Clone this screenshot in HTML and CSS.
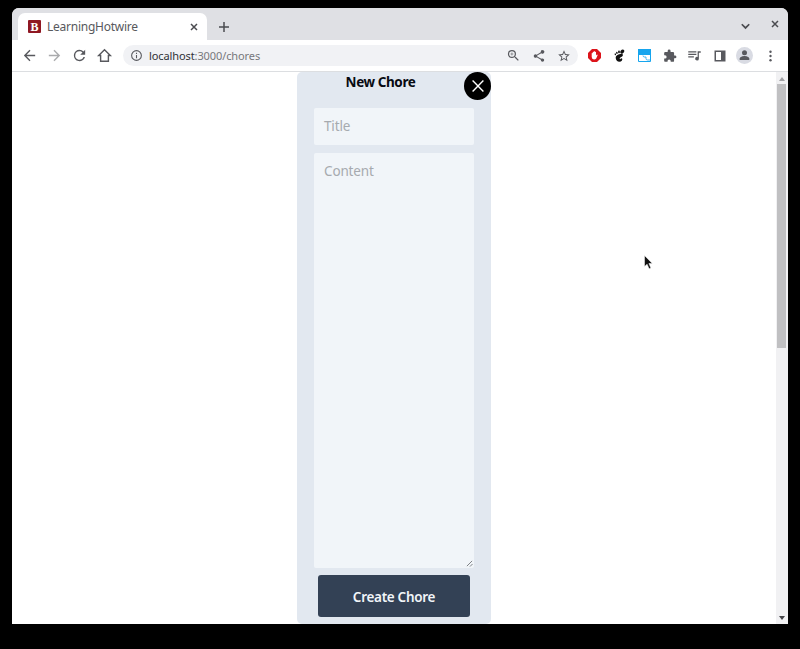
FILE: index.html
```html
<!DOCTYPE html>
<html lang="en">
<head>
<meta charset="utf-8">
<title>LearningHotwire</title>
<link rel="stylesheet" href="styles.css">
</head>
<body>
<div class="window">
  <header class="tabstrip">
    <div class="tab">
      <svg class="favicon" viewBox="0 0 13 13"><rect width="13" height="13" rx="1" fill="#8f1723"/><text x="6.5" y="11" text-anchor="middle">B</text></svg>
      <span class="tab-title">LearningHotwire</span>
      <svg class="tab-close" viewBox="0 0 8 8"><path d="M1 1l6 6M7 1L1 7"/></svg>
    </div>
    <svg class="new-tab" viewBox="0 0 10 10"><path d="M5 0v10M0 5h10"/></svg>
    <svg class="tab-search" viewBox="0 0 8 6"><path d="M.7 1L4 4.300 7.300 1"/></svg>
    <svg class="win-close" viewBox="0 0 8 8"><path d="M1 1l6 6M7 1L1 7"/></svg>
  </header>
  <nav class="toolbar">
    <div class="slots">
      <span class="slot"><svg class="i17" viewBox="0 0 24 24"><path d="M20 11H7.830l5.590-5.590L12 4l-8 8 8 8 1.410-1.410L7.830 13H20z"/></svg></span>
      <span class="slot faded"><svg class="i17" viewBox="0 0 24 24"><path d="M12 4l-1.410 1.410L16.170 11H4v2h12.170l-5.580 5.590L12 20l8-8z"/></svg></span>
      <span class="slot"><svg class="i17" viewBox="0 0 24 24"><path d="M17.650 6.350A7.960 7.960 0 0 0 12 4a8 8 0 1 0 7.730 10h-2.080A6 6 0 1 1 12 6c1.660 0 3.140.69 4.220 1.780L13 11h7V4z"/></svg></span>
      <span class="slot"><svg class="i17" viewBox="0 0 24 24"><path class="line" d="M12 4L3.800 12H6.500v8h11v-8h2.700z"/></svg></span>
    </div>
    <div class="omnibox">
      <svg class="info" viewBox="0 0 24 24"><path d="M11 7h2v2h-2zm0 4h2v6h-2zm1-9a10 10 0 1 0 0 20 10 10 0 0 0 0-20zm0 18a8 8 0 1 1 0-16 8 8 0 0 1 0 16z"/></svg>
      <span class="url"><b>localhost</b>:3000/chores</span>
      <div class="slots">
        <span class="slot"><svg class="i15" viewBox="0 0 24 24"><path d="M15.500 14h-.79l-.28-.27A6.470 6.470 0 0 0 16 9.500 6.500 6.500 0 1 0 9.500 16c1.610 0 3.090-.59 4.230-1.570l.27.28v.79l5 4.990L20.490 19zm-6 0a4.500 4.500 0 1 1 0-9 4.500 4.500 0 0 1 0 9zM12 10h-2v2H9v-2H7V9h2V7h1v2h2z"/></svg></span>
        <span class="slot"><svg class="i14" viewBox="0 0 24 24"><path d="M18 16.080c-.76 0-1.440.3-1.960.77L8.910 12.700a3.300 3.300 0 0 0 0-1.400l7.050-4.110A3 3 0 1 0 15 5c0 .24.040.47.090.7L8.040 9.810a3 3 0 1 0 0 4.380l7.120 4.160c-.05.21-.08.43-.08.65A2.920 2.920 0 1 0 18 16.080z"/></svg></span>
        <span class="slot"><svg class="i14" viewBox="0 0 24 24"><path d="M22 9.240l-7.190-.62L12 2 9.190 8.630 2 9.240l5.460 4.730L5.820 21 12 17.270 18.180 21l-1.630-7.030zM12 15.400l-3.760 2.270 1-4.280-3.320-2.880 4.380-.38L12 6.100l1.710 4.040 4.380.38-3.320 2.880 1 4.280z"/></svg></span>
      </div>
    </div>
    <div class="slots extensions">
      <span class="slot"><svg class="i13" viewBox="0 0 13 13"><path fill="#dc141b" d="M4 0h5l4 4v5l-4 4H4L0 9V4z"/><path fill="#fff" d="M3.700 6V4.200q.5-.6 1 0V3q.6-.7 1.100 0v-.6q.6-.6 1.100 0V3q.6-.6 1.100 0v3.400l.9-.8q.8-.1.700.6L8.200 9.400Q7.500 10.500 6 10.500 3.700 10.300 3.700 8z"/></svg></span>
      <span class="slot"><svg class="i13" viewBox="0 0 13 13"><g fill="#111"><ellipse cx="9.300" cy="2.600" rx="1.700" ry="2.300" transform="rotate(35 9.300 2.600)"/><ellipse cx="6" cy="2.900" rx=".9" ry="1.300"/><ellipse cx="3.900" cy="3.900" rx=".8" ry="1.100" transform="rotate(-15 3.900 3.900)"/><ellipse cx="2.300" cy="5.300" rx=".7" ry="1" transform="rotate(-25 2.300 5.300)"/><path d="M9.700 5.200C7 4.400 2.900 5.800 2.700 8.400c-.1 2.400 1.500 4.300 3.800 4.300 2 0 3.200-1.500 2.700-3-.4-.9-1.400-.6-1.600.1-.2.700-1 .6-.9-.2.200-1.600 4.300-2.300 3-4.400z"/></g></svg></span>
      <span class="slot"><svg class="i13" viewBox="0 0 13 13"><path fill="#fff" stroke="#16a5ee" d="M.5.500h12v12H.5z"/><path fill="#16a5ee" d="M0 0h13v6H0z"/><path fill="none" stroke="#16a5ee" stroke-width=".8" d="M5 6.500q0 1.500 1.500 1.500H8v1.500q0 1.500 1.500 1.500H12"/></svg></span>
      <span class="slot"><svg class="i14" viewBox="0 0 24 24"><path d="M20.500 11H19V7a2 2 0 0 0-2-2h-4V3.500a2.500 2.500 0 0 0-5 0V5H4a2 2 0 0 0-2 2v3.800h1.500a2.700 2.700 0 0 1 0 5.400H2V20c0 1.100.9 2 2 2h3.800v-1.500a2.700 2.700 0 0 1 5.400 0V22H17a2 2 0 0 0 2-2v-4h1.500a2.500 2.500 0 0 0 0-5z"/></svg></span>
      <span class="slot"><svg class="i15" viewBox="0 0 24 24"><path d="M2 5h13v2H2zm0 4h13v2H2zm0 4h9v2H2zM17 5h5v2.500h-3V17a3 3 0 1 1-2-2.800z"/></svg></span>
      <span class="slot"><svg class="i12" viewBox="0 0 12 12"><path fill-rule="evenodd" d="M.5.500h11v11H.5zM2 2v8h5V2z"/></svg></span>
      <span class="slot"><svg class="i17" viewBox="0 0 17 17"><circle cx="8.500" cy="8.500" r="8.500" fill="#d9dbe3"/><circle cx="8.500" cy="5.700" r="2.500"/><path d="M3.700 13v-1.500c0-1.700 3.200-2.600 4.800-2.600s4.800.9 4.800 2.600V13z"/></svg></span>
      <span class="slot"><svg class="i14" viewBox="0 0 14 14"><circle cx="7.500" cy="2.800" r="1.200"/><circle cx="7.500" cy="7" r="1.200"/><circle cx="7.500" cy="11.200" r="1.200"/></svg></span>
    </div>
  </nav>
  <main class="page">
    <section class="viewport">
      <form class="card">
        <h1>New Chore</h1>
        <button class="dismiss" type="button" aria-label="Close"><svg viewBox="0 0 12 12"><path d="M.6.6l10.800 10.800M11.400.6L.6 11.400"/></svg></button>
        <div class="field title">Title</div>
        <div class="field content">Content<svg class="grip" viewBox="0 0 8 8"><path d="M1 7l6-6M4.500 7.500l3-3"/></svg></div>
        <button class="submit" type="button">Create Chore</button>
      </form>
    </section>
    <aside class="scrollbar">
      <svg viewBox="0 0 6 4"><path fill="#a0a0a3" d="M0 4l3-4 3 4z"/></svg>
      <div class="thumb"></div>
      <svg class="down" viewBox="0 0 6 4"><path fill="#454548" d="M0 0l3 4 3-4z"/></svg>
    </aside>
  </main>
</div>
<svg class="cursor" viewBox="0 0 9 15"><path d="M.5.500v11l2.600-2.300 2 4.600 1.800-.8-2-4.500h3.400z"/></svg>
</body>
</html>
```
FILE: styles.css
```css
* { box-sizing: border-box; }
body {
  margin: 0;
  height: 649px;
  padding: 8px 12px 25px;
  background: #000;
  overflow: hidden;
  font-family: "Noto Sans", sans-serif;
}
svg { display: block; flex: none; }
.window {
  height: 616px;
  display: flex;
  flex-direction: column;
  background: #fff;
  border-radius: 7px 7px 0 0;
  overflow: hidden;
}
.tabstrip {
  height: 32px;
  flex: none;
  display: flex;
  align-items: center;
  padding: 5px 9px 0 6px;
  background: #dfe0e4;
}
.tabstrip path { fill: none; stroke: #4b4c50; stroke-width: 1.500; }
.tab {
  width: 189px;
  height: 27px;
  display: flex;
  align-items: center;
  padding: 0 9px 0 10px;
  background: #fff;
  border-radius: 7px 7px 0 0;
}
.favicon { width: 13px; height: 13px; }
.favicon text { font: bold 12px "Liberation Serif", serif; fill: #fff; }
.tab-title { margin-left: 6px; font-size: 12px; line-height: 16px; letter-spacing: -.25px; color: #58595d; }
.tab-close { width: 8px; height: 8px; margin-left: auto; }
.new-tab { width: 10px; height: 10px; margin-left: 12px; }
.tab-search { width: 9px; height: 7px; margin-left: auto; }
.win-close { width: 8px; height: 8px; margin: -5px 0 0 21px; }
.toolbar {
  height: 32px;
  flex: none;
  display: flex;
  align-items: center;
  padding-left: 5px;
  border-bottom: 1px solid #dcdee1;
}
.slots { display: flex; }
.slot { width: 25px; height: 20px; display: flex; align-items: center; justify-content: center; }
.toolbar svg { fill: #58595e; }
.faded { opacity: .5; }
.line { fill: none; stroke: #58595e; stroke-width: 2; }
.i17 { width: 17px; height: 17px; }
.i15 { width: 15px; height: 15px; }
.i14 { width: 14px; height: 14px; }
.i13 { width: 13px; height: 13px; }
.i12 { width: 12px; height: 12px; }
.omnibox {
  width: 455px;
  height: 21px;
  margin-left: 6px;
  display: flex;
  align-items: center;
  padding: 0 2px 0 7px;
  background: #f1f2f5;
  border-radius: 11px;
}
.omnibox .slots { margin-left: auto; }
.info { width: 13px; height: 13px; }
.url { margin-left: 6px; font-size: 11px; line-height: 16px; letter-spacing: -.1px; color: #77787c; }
.url b { font-weight: 400; color: #303135; }
.extensions { margin-left: 4px; }
.page { flex: 1; display: flex; min-height: 0; }
.viewport { flex: 1; padding-left: 285px; }
.card {
  position: relative;
  width: 194px;
  height: 552px;
  display: flex;
  flex-direction: column;
  padding: 0 17px;
  background: #e2e8f0;
  border-radius: 5px;
}
h1 {
  margin: 0 27px 15px 0;
  height: 21px;
  font-size: 13.500px;
  line-height: 21px;
  letter-spacing: -.42px;
  text-align: center;
  color: #080b12;
}
.dismiss {
  position: absolute;
  top: 0;
  right: 0;
  width: 27px;
  height: 28px;
  padding: 0;
  display: flex;
  align-items: center;
  justify-content: center;
  border: 0;
  border-radius: 50%;
  background: #000;
}
.dismiss svg { width: 12px; height: 12px; fill: none; stroke: #fff; stroke-width: 1.400; }
.field {
  position: relative;
  width: 160px;
  padding: 8px 10px;
  background: #f1f5f9;
  border-radius: 2px;
  font-size: 13.500px;
  line-height: 20px;
  letter-spacing: -.15px;
  color: #a6aaaf;
}
.title { height: 37px; margin-bottom: 8px; }
.content { height: 415px; }
.grip { position: absolute; right: 1px; bottom: 1px; width: 7px; height: 7px; fill: none; stroke: #6f7276; stroke-width: 1; }
.submit {
  width: 152px;
  height: 42px;
  margin: 7px 0 0 4px;
  padding: 1px 0 0;
  border: 0;
  border-radius: 3px;
  background: #334155;
  color: #f1f5f9;
  font: 600 13.500px "Noto Sans", sans-serif;
  letter-spacing: -.3px;
}
.scrollbar {
  width: 12px;
  display: flex;
  flex-direction: column;
  align-items: center;
  padding: 5px 1px 4px 0;
  background: #f1f1f3;
}
.scrollbar svg { width: 6px; height: 4px; }
.thumb { width: 9px; height: 264px; margin-top: 3px; background: #c0c0c2; }
.scrollbar .down { margin-top: auto; }
.cursor {
  position: absolute;
  left: 644px;
  top: 255px;
  width: 9px;
  height: 15px;
  fill: #111;
  stroke: #fff;
  stroke-width: .5;
}
```
